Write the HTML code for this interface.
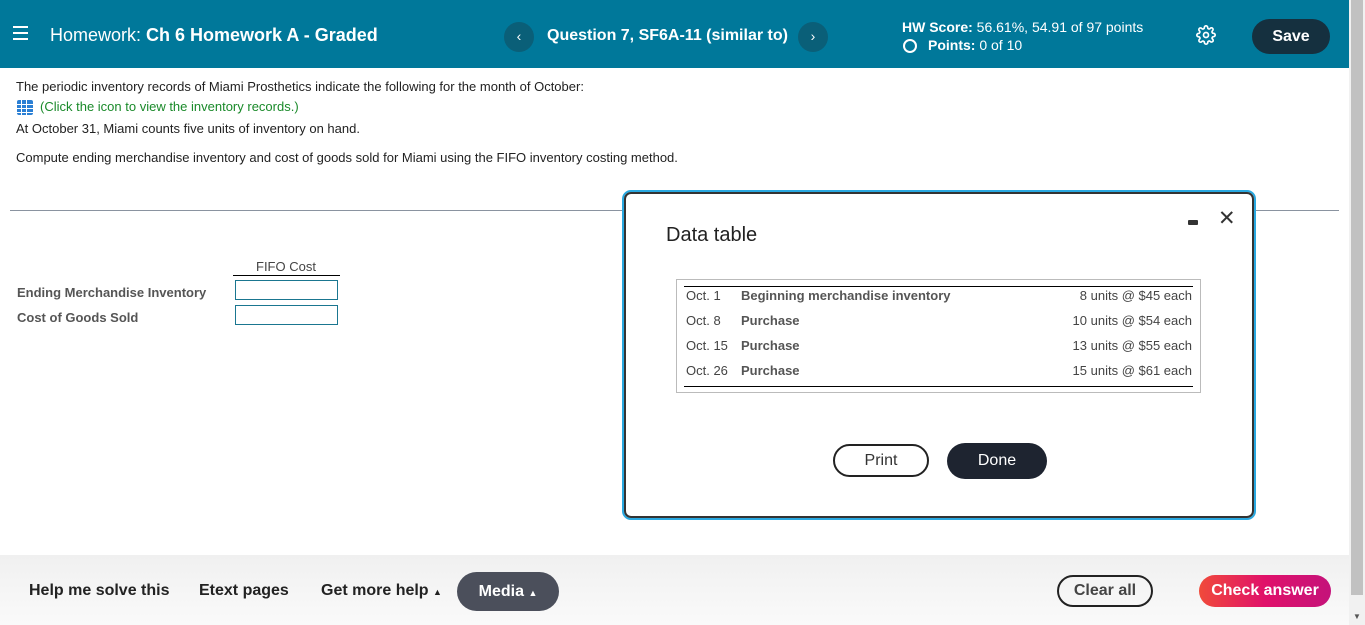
<!DOCTYPE html>
<html><head><style>
*{box-sizing:border-box;margin:0;padding:0}
body{width:1365px;height:625px;overflow:hidden;font-family:"Liberation Sans",Arial,sans-serif;background:#fff;position:relative;color:#222}
.hdr{position:absolute;left:0;top:0;width:1349px;height:68px;background:#00789a;color:#fff}
.abs{position:absolute}
.sb{position:absolute;left:1349px;top:0;width:16px;height:625px;background:#f1f1f1}
.sb .th{position:absolute;left:2px;top:0;width:12px;height:595px;background:#c1c1c1}
.q{font-size:13px;color:#222;white-space:nowrap}
.ftr{position:absolute;left:0;top:555px;width:1349px;height:70px;background:linear-gradient(#f0f0f0,#fafafa)}
.fb{position:absolute;top:591px;transform:translateY(-50%);font-size:16px;font-weight:bold;color:#222}
td{font-size:13px;color:#444;padding:0 0;height:25px;white-space:nowrap}
</style></head><body>
<div class="hdr">
 <div class="abs" style="left:13px;top:26px;width:15px;height:2px;background:#fff;box-shadow:0 6px 0 #fff,0 12px 0 #fff"></div>
 <div class="abs" style="left:50px;top:25px;font-size:18px">Homework: <b>Ch 6 Homework A - Graded</b></div>
 <div class="abs" style="left:504px;top:22px;width:30px;height:30px;border-radius:50%;background:#0a5f78;text-align:center;line-height:29px;font-size:14px">‹</div>
 <div class="abs" style="left:547px;top:27px;font-size:16px;font-weight:bold">Question 7, SF6A-11 (similar to)</div>
 <div class="abs" style="left:798px;top:22px;width:30px;height:30px;border-radius:50%;background:#0a5f78;text-align:center;line-height:29px;font-size:14px">›</div>
 <div class="abs" style="left:902px;top:19px;font-size:14px"><b>HW Score:</b> 56.61%, 54.91 of 97 points</div>
 <div class="abs" style="left:903px;top:39px;width:14px;height:14px;border:2px solid #fff;border-radius:50%"></div>
 <div class="abs" style="left:928px;top:37px;font-size:14px"><b>Points:</b> 0 of 10</div>
 <svg class="abs" style="left:1196px;top:25px" width="20" height="20" viewBox="0 0 24 24" fill="none" stroke="#fff" stroke-width="2"><circle cx="12" cy="12" r="3"/><path d="M19.4 15a1.7 1.7 0 0 0 .3 1.8l.1.1a2 2 0 1 1-2.8 2.8l-.1-.1a1.7 1.7 0 0 0-1.8-.3 1.7 1.7 0 0 0-1 1.5V21a2 2 0 1 1-4 0v-.1a1.7 1.7 0 0 0-1.1-1.5 1.7 1.7 0 0 0-1.8.3l-.1.1a2 2 0 1 1-2.8-2.8l.1-.1a1.7 1.7 0 0 0 .3-1.8 1.7 1.7 0 0 0-1.500-1H3a2 2 0 1 1 0-4h.1a1.7 1.7 0 0 0 1.5-1.1 1.7 1.7 0 0 0-.3-1.8l-.1-.1a2 2 0 1 1 2.8-2.8l.1.1a1.7 1.7 0 0 0 1.8.3H9a1.7 1.7 0 0 0 1-1.5V3a2 2 0 1 1 4 0v.1a1.7 1.7 0 0 0 1 1.5 1.7 1.7 0 0 0 1.8-.3l.1-.1a2 2 0 1 1 2.8 2.8l-.1.1a1.7 1.7 0 0 0-.3 1.8V9a1.7 1.7 0 0 0 1.5 1H21a2 2 0 1 1 0 4h-.1a1.7 1.7 0 0 0-1.5 1z"/></svg>
 <div class="abs" style="left:1252px;top:19px;width:78px;height:35px;border-radius:18px;background:#15303f;text-align:center;line-height:35px;font-size:16px;font-weight:bold">Save</div>
</div>
<div class="sb"><div class="th"></div><div class="abs" style="left:4px;top:612px;font-size:8px;color:#555">▼</div></div>

<div class="abs q" style="left:16px;top:79px">The periodic inventory records of Miami Prosthetics indicate the following for the month of October:</div>
<div class="abs" style="left:17px;top:100px;width:16px;height:15px;background:#2a7fd4;border-radius:2px;background-image:linear-gradient(90deg,transparent 4px,#fff 4px,#fff 5px,transparent 5px,transparent 9px,#fff 9px,#fff 10px,transparent 10px),linear-gradient(transparent 4px,#fff 4px,#fff 5px,transparent 5px,transparent 8px,#fff 8px,#fff 9px,transparent 9px,transparent 12px,#fff 12px,#fff 13px,transparent 13px)"></div>
<div class="abs q" style="left:40px;top:99px;color:#1a8a2a">(Click the icon to view the inventory records.)</div>
<div class="abs q" style="left:16px;top:121px">At October 31, Miami counts five units of inventory on hand.</div>
<div class="abs q" style="left:16px;top:150px">Compute ending merchandise inventory and cost of goods sold for Miami using the FIFO inventory costing method.</div>
<div class="abs" style="left:10px;top:210px;width:1329px;height:1px;background:#8a93a0"></div>

<div class="abs" style="left:256px;top:259px;font-size:13px;color:#444">FIFO Cost</div>
<div class="abs" style="left:233px;top:275px;width:107px;height:1px;background:#000"></div>
<div class="abs" style="left:17px;top:285px;font-size:13px;font-weight:bold;color:#555">Ending Merchandise Inventory</div>
<div class="abs" style="left:17px;top:310px;font-size:13px;font-weight:bold;color:#555">Cost of Goods Sold</div>
<div class="abs" style="left:235px;top:280px;width:103px;height:20px;border:1px solid #1a7690"></div>
<div class="abs" style="left:235px;top:305px;width:103px;height:20px;border:1px solid #1a7690"></div>

<div class="abs" style="left:622px;top:190px;width:634px;height:330px;border:2px solid #29a8e0;border-radius:9px;background:#fff">
 <div style="position:absolute;inset:0;border:2px solid #333;border-radius:7px"></div>
 <div class="abs" style="left:42px;top:32px;font-size:20px;color:#222">Data table</div>
 <div class="abs" style="left:564px;top:28px;width:10px;height:5px;background:#333;border-radius:1px"></div>
 <div class="abs" style="left:594px;top:14px;font-size:21px;color:#333">✕</div>
 <div class="abs" style="left:52px;top:87px;width:525px;height:114px;border:1px solid #bbb">
  <div class="abs" style="left:7px;top:6px;width:509px;border-top:1.5px solid #000"></div>
  <div class="abs" style="left:7px;top:106px;width:509px;border-top:1.5px solid #000"></div>
  <table class="abs" style="left:9px;top:3px;width:506px;border-collapse:collapse">
   <tr><td style="width:55px">Oct. 1</td><td style="font-weight:bold;color:#555">Beginning merchandise inventory</td><td style="text-align:right">8 units @ $45 each</td></tr>
   <tr><td>Oct. 8</td><td style="font-weight:bold;color:#555">Purchase</td><td style="text-align:right">10 units @ $54 each</td></tr>
   <tr><td>Oct. 15</td><td style="font-weight:bold;color:#555">Purchase</td><td style="text-align:right">13 units @ $55 each</td></tr>
   <tr><td>Oct. 26</td><td style="font-weight:bold;color:#555">Purchase</td><td style="text-align:right">15 units @ $61 each</td></tr>
  </table>
 </div>
 <div class="abs" style="left:209px;top:252px;width:96px;height:33px;border:2px solid #222;border-radius:17px;text-align:center;line-height:29px;font-size:16px;color:#333">Print</div>
 <div class="abs" style="left:323px;top:251px;width:100px;height:36px;border-radius:18px;background:#1e2430;text-align:center;line-height:36px;font-size:16px;color:#fff">Done</div>
</div>

<div class="ftr"></div>
<div class="fb" style="left:29px">Help me solve this</div>
<div class="fb" style="left:199px">Etext pages</div>
<div class="fb" style="left:321px">Get more help <span style="font-size:9px">▲</span></div>
<div class="abs" style="left:457px;top:572px;width:102px;height:39px;border-radius:20px;background:#4b4f5b;color:#fff;font-size:16px;font-weight:bold;text-align:center;line-height:39px">Media <span style="font-size:9px">▲</span></div>
<div class="abs" style="left:1057px;top:575px;width:96px;height:32px;border:2px solid #222;border-radius:17px;text-align:center;line-height:28px;font-size:16px;font-weight:bold;color:#444">Clear all</div>
<div class="abs" style="left:1199px;top:575px;width:132px;height:32px;border-radius:16px;background:linear-gradient(90deg,#f04a3a,#e0116a,#c4127a);color:#fff;text-align:center;line-height:32px;font-size:16px;font-weight:bold">Check answer</div>
</body></html>
